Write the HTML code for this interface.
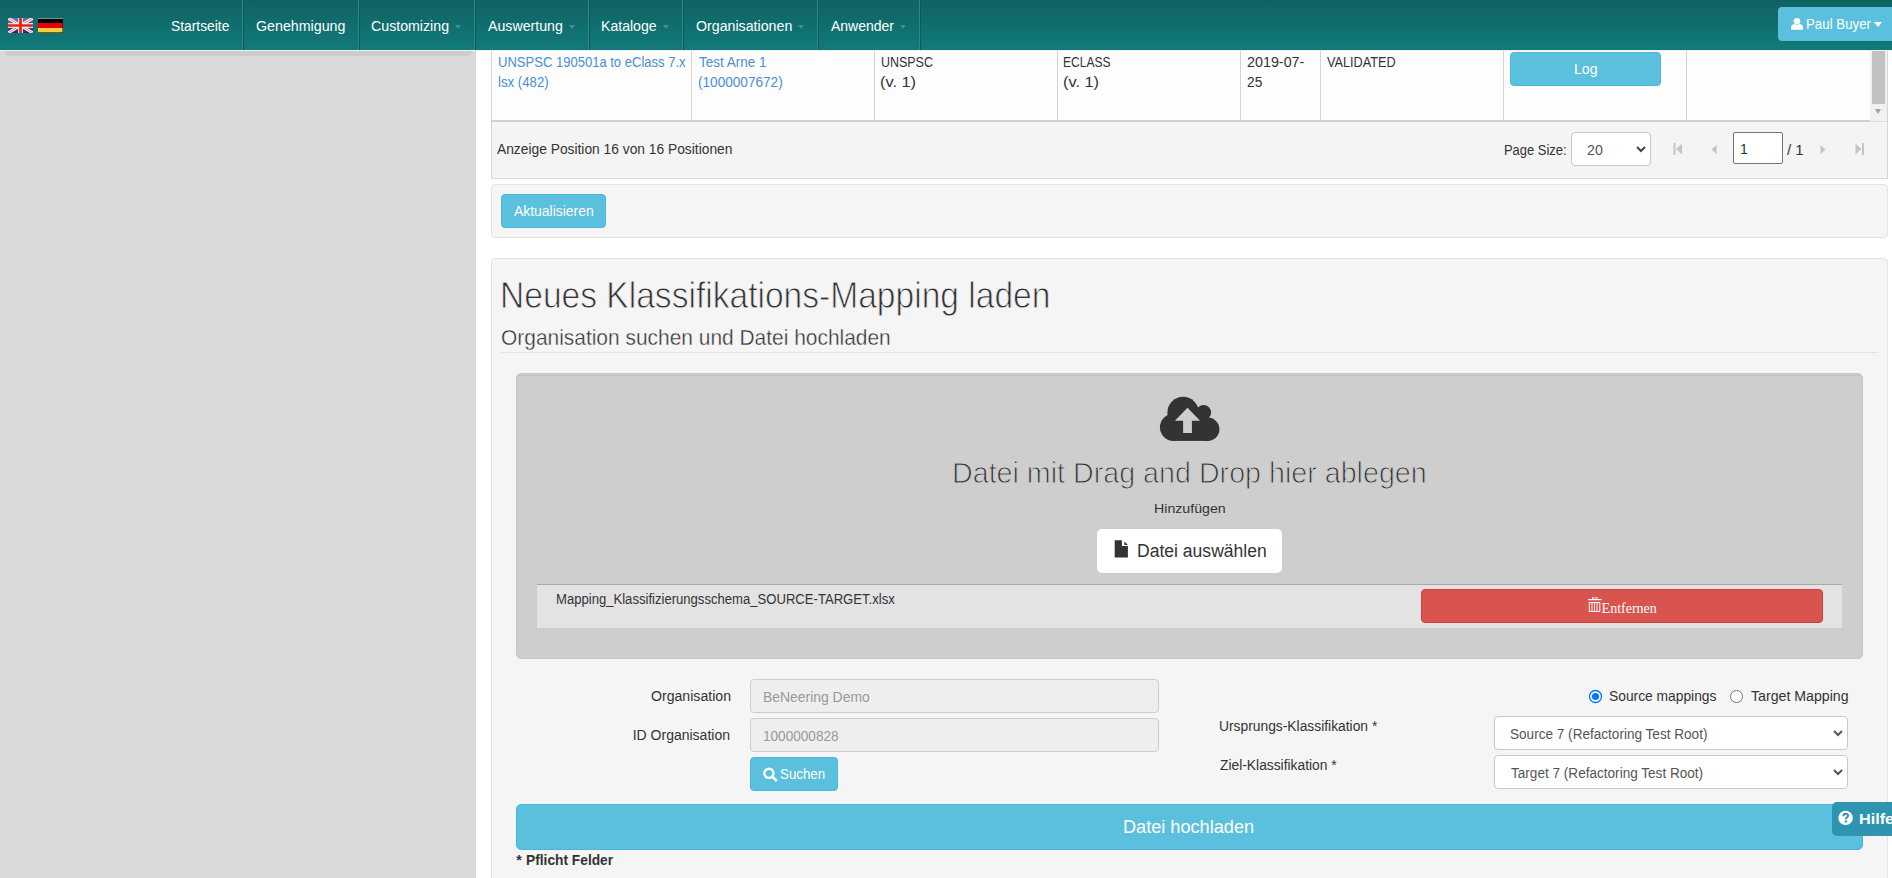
<!DOCTYPE html>
<html><head><meta charset="utf-8"><title>Klassifikations-Mapping</title>
<style>
html,body{margin:0;padding:0;width:1892px;height:878px;overflow:hidden;background:#fff;position:relative}
body{font-family:"Liberation Sans", sans-serif}
.t{position:absolute;white-space:nowrap}
.f1{font-family:"Liberation Sans", sans-serif}
.f2{font-family:"Liberation Serif", serif}
</style></head><body>
<div style="position:absolute;left:0px;top:0px;width:1892px;height:50px;background:linear-gradient(#0f6262,#127a7a);"></div>
<div style="position:absolute;left:242px;top:0px;width:1px;height:50px;background:#2e8888;"></div>
<div style="position:absolute;left:243px;top:0px;width:1px;height:50px;background:#0c5a5a;"></div>
<div style="position:absolute;left:358px;top:0px;width:1px;height:50px;background:#2e8888;"></div>
<div style="position:absolute;left:359px;top:0px;width:1px;height:50px;background:#0c5a5a;"></div>
<div style="position:absolute;left:474px;top:0px;width:1px;height:50px;background:#2e8888;"></div>
<div style="position:absolute;left:475px;top:0px;width:1px;height:50px;background:#0c5a5a;"></div>
<div style="position:absolute;left:588px;top:0px;width:1px;height:50px;background:#2e8888;"></div>
<div style="position:absolute;left:589px;top:0px;width:1px;height:50px;background:#0c5a5a;"></div>
<div style="position:absolute;left:682px;top:0px;width:1px;height:50px;background:#2e8888;"></div>
<div style="position:absolute;left:683px;top:0px;width:1px;height:50px;background:#0c5a5a;"></div>
<div style="position:absolute;left:817px;top:0px;width:1px;height:50px;background:#2e8888;"></div>
<div style="position:absolute;left:818px;top:0px;width:1px;height:50px;background:#0c5a5a;"></div>
<div style="position:absolute;left:919px;top:0px;width:1px;height:50px;background:#2e8888;"></div>
<div style="position:absolute;left:920px;top:0px;width:1px;height:50px;background:#0c5a5a;"></div>
<div style="position:absolute;left:455px;top:24.6px;width:0;height:0;border-left:3.5px solid transparent;border-right:3.5px solid transparent;border-top:4px solid rgba(255,255,255,0.22)"></div>
<div style="position:absolute;left:569px;top:24.6px;width:0;height:0;border-left:3.5px solid transparent;border-right:3.5px solid transparent;border-top:4px solid rgba(255,255,255,0.22)"></div>
<div style="position:absolute;left:662.5px;top:24.6px;width:0;height:0;border-left:3.5px solid transparent;border-right:3.5px solid transparent;border-top:4px solid rgba(255,255,255,0.22)"></div>
<div style="position:absolute;left:797.5px;top:24.6px;width:0;height:0;border-left:3.5px solid transparent;border-right:3.5px solid transparent;border-top:4px solid rgba(255,255,255,0.22)"></div>
<div style="position:absolute;left:899.5px;top:24.6px;width:0;height:0;border-left:3.5px solid transparent;border-right:3.5px solid transparent;border-top:4px solid rgba(255,255,255,0.22)"></div>
<svg style="position:absolute;left:8px;top:18px" width="25" height="15" viewBox="0 0 60 36">
<defs><linearGradient id="ukb" x1="0" y1="0" x2="0" y2="1"><stop offset="0" stop-color="#7070cc"/><stop offset="1" stop-color="#25257a"/></linearGradient></defs>
<rect width="60" height="36" fill="url(#ukb)"/>
<path d="M0,0 L60,36 M60,0 L0,36" stroke="#fff" stroke-width="7"/>
<path d="M0,0 L60,36 M60,0 L0,36" stroke="#f04020" stroke-width="1.8"/>
<path d="M30,0 V36 M0,18 H60" stroke="#fff" stroke-width="11"/>
<path d="M30,0 V36 M0,18 H60" stroke="#ee2000" stroke-width="6.5"/>
</svg>
<svg style="position:absolute;left:38px;top:18px" width="25" height="15" viewBox="0 0 25 15">
<rect y="0" width="25" height="5" fill="#000"/>
<rect y="0" width="25" height="1" fill="#8a8a8a"/>
<rect y="5" width="25" height="5" fill="#e60000"/>
<rect y="10" width="25" height="5" fill="#f7cd3c"/>
<rect y="14" width="25" height="1" fill="#7a5a10"/>
<rect x="24" y="1" width="1" height="14" fill="#000" opacity="0.45"/>
</svg>
<div style="position:absolute;left:1778px;top:7px;width:120px;height:34px;background:#5bc0de;border-radius:4px;"></div>
<svg style="position:absolute;left:1790px;top:16px" width="14" height="15" viewBox="0 0 14 15">
<circle cx="7" cy="5.3" r="3.3" fill="#fff"/>
<path d="M1,13.8 V11.8 Q1,8.6 4.2,8.1 Q7,9.6 9.8,8.1 Q13,8.6 13,11.8 V13.8 Z" fill="#fff"/>
</svg>
<div style="position:absolute;left:1874px;top:22px;width:0;height:0;border-left:4.5px solid transparent;border-right:4.5px solid transparent;border-top:5px solid #fff"></div>
<div style="position:absolute;left:0px;top:50px;width:1892px;height:1px;background:#f0eded;"></div>
<div style="position:absolute;left:0px;top:51px;width:476px;height:827px;background:#d9d9d9;"></div>
<div style="position:absolute;left:4px;top:51px;width:468px;height:5px;background:#cdcdcd;border-radius:0 0 5px 5px;"></div>
<div style="position:absolute;left:491px;top:51px;width:1397px;height:71px;background:#fdfdfd;"></div>
<div style="position:absolute;left:491px;top:51px;width:1px;height:128px;background:#d6d6d6;"></div>
<div style="position:absolute;left:691px;top:51px;width:1px;height:69px;background:#d4d4d4;"></div>
<div style="position:absolute;left:874px;top:51px;width:1px;height:69px;background:#d4d4d4;"></div>
<div style="position:absolute;left:1057px;top:51px;width:1px;height:69px;background:#d4d4d4;"></div>
<div style="position:absolute;left:1240px;top:51px;width:1px;height:69px;background:#d4d4d4;"></div>
<div style="position:absolute;left:1320px;top:51px;width:1px;height:69px;background:#d4d4d4;"></div>
<div style="position:absolute;left:1503px;top:51px;width:1px;height:69px;background:#d4d4d4;"></div>
<div style="position:absolute;left:1686px;top:51px;width:1px;height:69px;background:#d4d4d4;"></div>
<div style="position:absolute;left:491px;top:120px;width:1379px;height:2px;background:#d0d0d0;"></div>
<div style="position:absolute;left:1510px;top:52px;width:149px;height:32px;background:#5bc0de;border:1px solid #46b8da;border-radius:4px;"></div>
<div style="position:absolute;left:1870px;top:51px;width:17px;height:71px;background:#f1f1f1;"></div>
<div style="position:absolute;left:1872px;top:51px;width:13px;height:53px;background:#c1c1c1;"></div>
<div style="position:absolute;left:1875px;top:109px;width:0;height:0;border-left:3.5px solid transparent;border-right:3.5px solid transparent;border-top:5px solid #a3a3a3"></div>
<div style="position:absolute;left:1887px;top:51px;width:1px;height:128px;background:#d6d6d6;"></div>
<div style="position:absolute;left:1870px;top:121px;width:17px;height:1px;background:#dcdcdc;"></div>
<div style="position:absolute;left:492px;top:122px;width:1395px;height:56px;background:#f4f4f4;"></div>
<div style="position:absolute;left:491px;top:178px;width:1397px;height:1px;background:#dcdcdc;"></div>
<div style="position:absolute;left:1571px;top:132px;width:78px;height:32px;background:#fff;border:1px solid #c8c8c8;border-radius:4px;"></div>
<svg style="position:absolute;left:1636px;top:146px" width="10" height="7" viewBox="0 0 10 7"><path d="M1,1 L5,5 L9,1" fill="none" stroke="#444" stroke-width="2"/></svg>
<svg style="position:absolute;left:1673px;top:143px" width="10" height="12" viewBox="0 0 10 12"><rect x="0.5" y="0" width="2" height="12" fill="#c4c4c4"/><path d="M9,0.5 V11.5 L3,6 Z" fill="#c4c4c4"/></svg>
<svg style="position:absolute;left:1711px;top:145px" width="6" height="9" viewBox="0 0 6 9"><path d="M5.5,0 V9 L0.5,4.5 Z" fill="#c4c4c4"/></svg>
<div style="position:absolute;left:1733px;top:132px;width:48px;height:30px;background:#fff;border:1px solid #767676;border-radius:2px;"></div>
<svg style="position:absolute;left:1820px;top:145px" width="6" height="9" viewBox="0 0 6 9"><path d="M0.5,0 V9 L5.5,4.5 Z" fill="#c4c4c4"/></svg>
<svg style="position:absolute;left:1855px;top:143px" width="10" height="12" viewBox="0 0 10 12"><path d="M0.5,0.5 V11.5 L6.5,6 Z" fill="#c4c4c4"/><rect x="7" y="0" width="2" height="12" fill="#c4c4c4"/></svg>
<div style="position:absolute;left:491px;top:184px;width:1395px;height:52px;background:#f5f5f5;border:1px solid #e3e3e3;border-radius:4px;"></div>
<div style="position:absolute;left:501px;top:194px;width:103px;height:32px;background:#5bc0de;border:1px solid #46b8da;border-radius:4px;"></div>
<div style="position:absolute;left:491px;top:258px;width:1395px;height:640px;background:#f5f5f5;border:1px solid #e3e3e3;border-radius:4px;"></div>
<div style="position:absolute;left:501px;top:352px;width:1377px;height:1px;background:#e3e3e3;"></div>
<div style="position:absolute;left:516px;top:373px;width:1345px;height:284px;background:#cecece;border:1px solid #c9c9c9;border-radius:5px;box-shadow:inset 0 1px 0 #cacaca, inset 0 2px 0 #c4c4c4, inset 1px 0 0 #cbcbcb, inset -1px 0 0 #cbcbcb;"></div>
<svg style="position:absolute;left:1140px;top:390px" width="100" height="60" viewBox="0 0 100 60">
<g fill="#333">
<circle cx="43.1" cy="22.5" r="15.7"/>
<circle cx="63.6" cy="22.6" r="7.5"/>
<circle cx="33.5" cy="37.3" r="13.6"/>
<circle cx="67.7" cy="39.2" r="11.7"/>
<rect x="33.5" y="28" width="34.5" height="22.9"/>
</g>
<path d="M47.5,17.8 L60.1,30.7 L51.9,30.7 L51.9,43 L43.1,43 L43.1,30.7 L34.9,30.7 Z" fill="#cecece"/>
</svg>
<div style="position:absolute;left:1097px;top:529px;width:185px;height:44px;background:#fff;border-radius:5px;"></div>
<svg style="position:absolute;left:1090px;top:495px" width="40" height="70" viewBox="0 0 40 70">
<path d="M24.7,45.2 H31.9 V50.9 H37.9 V62.6 H24.7 Z" fill="#333"/>
<path d="M34.4,46.4 L37.9,49.9 H34.4 Z" fill="#333"/>
</svg>
<div style="position:absolute;left:537px;top:584px;width:1305px;height:44px;background:#e3e3e3;box-shadow:inset 0 1px 0 #a9a9a9;"></div>
<div style="position:absolute;left:1421px;top:589px;width:400px;height:32px;background:#d9534f;border:1px solid #d43f3a;border-radius:4px;"></div>
<svg style="position:absolute;left:1588px;top:597px" width="14" height="16" viewBox="0 0 14 16">
<rect x="0" y="2" width="13.5" height="1.2" fill="#fff"/>
<rect x="4.5" y="0" width="4.5" height="2" fill="none" stroke="#fff" stroke-width="0.8"/>
<rect x="1.3" y="5.6" width="10.5" height="8.8" fill="none" stroke="#fff" stroke-width="1"/>
<path d="M4,5.6 V14.4 M6.5,5.6 V14.4 M9,5.6 V14.4" stroke="#fff" stroke-width="0.9"/>
</svg>
<div style="position:absolute;left:750px;top:679px;width:407px;height:32px;background:#eee;border:1px solid #ccc;border-radius:4px;"></div>
<div style="position:absolute;left:750px;top:718px;width:407px;height:32px;background:#eee;border:1px solid #ccc;border-radius:4px;"></div>
<div style="position:absolute;left:750px;top:757px;width:86px;height:32px;background:#5bc0de;border:1px solid #46b8da;border-radius:4px;"></div>
<svg style="position:absolute;left:762px;top:767px" width="16" height="15" viewBox="0 0 16 15">
<circle cx="6.9" cy="6.3" r="4.6" fill="none" stroke="#fff" stroke-width="2.4"/>
<path d="M10.2,9.6 L14,13.3" stroke="#fff" stroke-width="2.6" stroke-linecap="round"/>
</svg>
<svg style="position:absolute;left:1588px;top:689px" width="15" height="15" viewBox="0 0 15 15">
<circle cx="7.5" cy="7.5" r="6" fill="#fff" stroke="#0075ff" stroke-width="1.3"/>
<circle cx="7.5" cy="7.5" r="3.6" fill="#0075ff"/>
</svg>
<svg style="position:absolute;left:1729px;top:689px" width="15" height="15" viewBox="0 0 15 15">
<circle cx="7.5" cy="7.5" r="6" fill="#fff" stroke="#767676" stroke-width="1"/>
</svg>
<div style="position:absolute;left:1494px;top:716px;width:352px;height:32px;background:#fff;border:1px solid #c8c8c8;border-radius:4px;"></div>
<div style="position:absolute;left:1494px;top:755px;width:352px;height:32px;background:#fff;border:1px solid #c8c8c8;border-radius:4px;"></div>
<svg style="position:absolute;left:1833px;top:730px" width="10" height="7" viewBox="0 0 10 7"><path d="M1,1 L5,5 L9,1" fill="none" stroke="#555" stroke-width="2"/></svg>
<svg style="position:absolute;left:1833px;top:769px" width="10" height="7" viewBox="0 0 10 7"><path d="M1,1 L5,5 L9,1" fill="none" stroke="#555" stroke-width="2"/></svg>
<div style="position:absolute;left:516px;top:804px;width:1345px;height:44px;background:#5bc0de;border:1px solid #46b8da;border-radius:5px;"></div>
<div style="position:absolute;left:1888px;top:51px;width:4px;height:827px;background:#fff;"></div>
<div style="position:absolute;left:1832px;top:802px;width:70px;height:34px;background:#2e94b0;border-radius:5px;"></div>
<svg style="position:absolute;left:1838px;top:810px" width="16" height="16" viewBox="0 0 16 16">
<circle cx="7.6" cy="7.9" r="7.2" fill="#fff"/>
<path d="M5.3,6.2 Q5.4,3.7 7.7,3.7 Q10,3.7 10,5.7 Q10,7 8.6,7.6 Q7.9,8 7.9,9.2" fill="none" stroke="#2e94b0" stroke-width="1.9"/>
<rect x="6.8" y="10.4" width="2.1" height="2.1" fill="#2e94b0"/>
</svg>
<div class="t f1" style="left:170.97px;top:19.1px;font-size:14px;line-height:14px;color:#fff;transform:scaleX(0.9865);transform-origin:0 0;">Startseite</div>
<div class="t f1" style="left:255.98px;top:19.1px;font-size:14px;line-height:14px;color:#fff;transform:scaleX(1.0168);transform-origin:0 0;">Genehmigung</div>
<div class="t f1" style="left:370.88px;top:19.1px;font-size:14px;line-height:14px;color:#fff;transform:scaleX(1.0130);transform-origin:0 0;">Customizing</div>
<div class="t f1" style="left:488.07px;top:19.1px;font-size:14px;line-height:14px;color:#fff;transform:scaleX(1.0122);transform-origin:0 0;">Auswertung</div>
<div class="t f1" style="left:601.45px;top:19.1px;font-size:14px;line-height:14px;color:#fff;transform:scaleX(1.0054);transform-origin:0 0;">Kataloge</div>
<div class="t f1" style="left:695.53px;top:19.1px;font-size:14px;line-height:14px;color:#fff;transform:scaleX(1.0141);transform-origin:0 0;">Organisationen</div>
<div class="t f1" style="left:830.97px;top:19.1px;font-size:14px;line-height:14px;color:#fff;">Anwender</div>
<div class="t f1" style="left:1805.51px;top:17.1px;font-size:14px;line-height:14px;color:#fff;transform:scaleX(0.9493);transform-origin:0 0;">Paul Buyer</div>
<div class="t f1" style="left:497.90px;top:55.1px;font-size:14px;line-height:14px;color:#4a8fd4;transform:scaleX(0.9305);transform-origin:0 0;">UNSPSC 190501a to eClass 7.x</div>
<div class="t f1" style="left:498.01px;top:75.1px;font-size:14px;line-height:14px;color:#4a8fd4;transform:scaleX(0.9446);transform-origin:0 0;">lsx (482)</div>
<div class="t f1" style="left:699.10px;top:55.1px;font-size:14px;line-height:14px;color:#4a8fd4;transform:scaleX(0.9631);transform-origin:0 0;">Test Arne 1</div>
<div class="t f1" style="left:697.86px;top:75.1px;font-size:14px;line-height:14px;color:#4a8fd4;transform:scaleX(0.9713);transform-origin:0 0;">(1000007672)</div>
<div class="t f1" style="left:880.54px;top:55.1px;font-size:14px;line-height:14px;color:#333;transform:scaleX(0.8899);transform-origin:0 0;">UNSPSC</div>
<div class="t f1" style="left:880.49px;top:75.1px;font-size:14px;line-height:14px;color:#333;transform:scaleX(1.1675);transform-origin:0 0;">(v. 1)</div>
<div class="t f1" style="left:1063.41px;top:55.1px;font-size:14px;line-height:14px;color:#333;transform:scaleX(0.8605);transform-origin:0 0;">ECLASS</div>
<div class="t f1" style="left:1063.39px;top:75.1px;font-size:14px;line-height:14px;color:#333;transform:scaleX(1.1675);transform-origin:0 0;">(v. 1)</div>
<div class="t f1" style="left:1246.68px;top:55.1px;font-size:14px;line-height:14px;color:#333;transform:scaleX(1.0234);transform-origin:0 0;">2019-07-</div>
<div class="t f1" style="left:1246.71px;top:75.1px;font-size:14px;line-height:14px;color:#333;transform:scaleX(0.9800);transform-origin:0 0;">25</div>
<div class="t f1" style="left:1326.94px;top:55.1px;font-size:14px;line-height:14px;color:#333;transform:scaleX(0.9066);transform-origin:0 0;">VALIDATED</div>
<div class="t f1" style="left:1573.54px;top:62.1px;font-size:14px;line-height:14px;color:#fff;transform:scaleX(1.0090);transform-origin:0 0;">Log</div>
<div class="t f1" style="left:497.27px;top:141.9px;font-size:14px;line-height:14px;color:#333;transform:scaleX(0.9852);transform-origin:0 0;">Anzeige Position 16 von 16 Positionen</div>
<div class="t f1" style="left:1503.94px;top:143.1px;font-size:14px;line-height:14px;color:#333;transform:scaleX(0.9235);transform-origin:0 0;">Page Size:</div>
<div class="t f1" style="left:1587.29px;top:142.6px;font-size:14px;line-height:14px;color:#555;transform:scaleX(1.0121);transform-origin:0 0;">20</div>
<div class="t f1" style="left:1739.93px;top:141.6px;font-size:14px;line-height:14px;color:#333;">1</div>
<div class="t f1" style="left:1787.00px;top:142.6px;font-size:14px;line-height:14px;color:#333;transform:scaleX(1.0742);transform-origin:0 0;">/ 1</div>
<div class="t f1" style="left:514.27px;top:204.4px;font-size:14px;line-height:14px;color:#fff;transform:scaleX(0.9934);transform-origin:0 0;">Aktualisieren</div>
<div class="t f1" style="left:500.05px;top:277.7px;font-size:36px;line-height:36px;color:#333;transform:scaleX(0.9324);transform-origin:0 0;-webkit-text-stroke:0.85px #f5f5f5;">Neues Klassifikations-Mapping laden</div>
<div class="t f1" style="left:500.61px;top:328.0px;font-size:21.5px;line-height:21.5px;color:#333;transform:scaleX(0.9733);transform-origin:0 0;-webkit-text-stroke:0.35px #f5f5f5;">Organisation suchen und Datei hochladen</div>
<div class="t f1" style="left:951.85px;top:457.5px;font-size:30px;line-height:30px;color:#333;transform:scaleX(0.9553);transform-origin:0 0;-webkit-text-stroke:1px #cecece;">Datei mit Drag and Drop hier ablegen</div>
<div class="t f1" style="left:1154.04px;top:501.9px;font-size:13px;line-height:13px;color:#333;transform:scaleX(1.0897);transform-origin:0 0;">Hinzufügen</div>
<div class="t f1" style="left:1136.76px;top:541.9px;font-size:18px;line-height:18px;color:#333;transform:scaleX(0.9751);transform-origin:0 0;">Datei auswählen</div>
<div class="t f1" style="left:555.53px;top:592.1px;font-size:14px;line-height:14px;color:#333;transform:scaleX(0.9349);transform-origin:0 0;">Mapping_Klassifizierungsschema_SOURCE-TARGET.xlsx</div>
<div class="t f2" style="left:1601.60px;top:601.6px;font-size:14px;line-height:14px;color:#fff;">Entfernen</div>
<div class="t f1" style="left:650.93px;top:689.1px;font-size:14px;line-height:14px;color:#333;transform:scaleX(1.0075);transform-origin:0 0;">Organisation</div>
<div class="t f1" style="left:632.70px;top:728.1px;font-size:14px;line-height:14px;color:#333;">ID Organisation</div>
<div class="t f1" style="left:763.06px;top:690.1px;font-size:14px;line-height:14px;color:#999;transform:scaleX(0.9938);transform-origin:0 0;">BeNeering Demo</div>
<div class="t f1" style="left:762.56px;top:729.1px;font-size:14px;line-height:14px;color:#999;transform:scaleX(0.9711);transform-origin:0 0;">1000000828</div>
<div class="t f1" style="left:779.80px;top:767.1px;font-size:14px;line-height:14px;color:#fff;transform:scaleX(0.9513);transform-origin:0 0;">Suchen</div>
<div class="t f1" style="left:1608.97px;top:689.1px;font-size:14px;line-height:14px;color:#333;transform:scaleX(0.9860);transform-origin:0 0;">Source mappings</div>
<div class="t f1" style="left:1750.88px;top:689.1px;font-size:14px;line-height:14px;color:#333;transform:scaleX(1.0105);transform-origin:0 0;">Target Mapping</div>
<div class="t f1" style="left:1218.83px;top:718.8px;font-size:14px;line-height:14px;color:#333;transform:scaleX(0.9874);transform-origin:0 0;">Ursprungs-Klassifikation *</div>
<div class="t f1" style="left:1220.36px;top:758.1px;font-size:14px;line-height:14px;color:#333;transform:scaleX(0.9864);transform-origin:0 0;">Ziel-Klassifikation *</div>
<div class="t f1" style="left:1510.38px;top:727.1px;font-size:14px;line-height:14px;color:#555;transform:scaleX(0.9697);transform-origin:0 0;">Source 7 (Refactoring Test Root)</div>
<div class="t f1" style="left:1511.00px;top:766.1px;font-size:14px;line-height:14px;color:#555;transform:scaleX(0.9696);transform-origin:0 0;">Target 7 (Refactoring Test Root)</div>
<div class="t f1" style="left:1123.31px;top:817.7px;font-size:18px;line-height:18px;color:#fff;transform:scaleX(1.0073);transform-origin:0 0;">Datei hochladen</div>
<div class="t f1" style="left:516.26px;top:853.1px;font-size:14px;line-height:14px;color:#333;font-weight:bold;">*</div>
<div class="t f1" style="left:526.08px;top:853.1px;font-size:14px;line-height:14px;color:#333;font-weight:bold;transform:scaleX(0.9824);transform-origin:0 0;">Pflicht Felder</div>
<div class="t f1" style="left:1859.02px;top:812.1px;font-size:14px;line-height:14px;color:#fff;font-weight:bold;transform:scaleX(1.1580);transform-origin:0 0;">Hilfe</div>
</body></html>
